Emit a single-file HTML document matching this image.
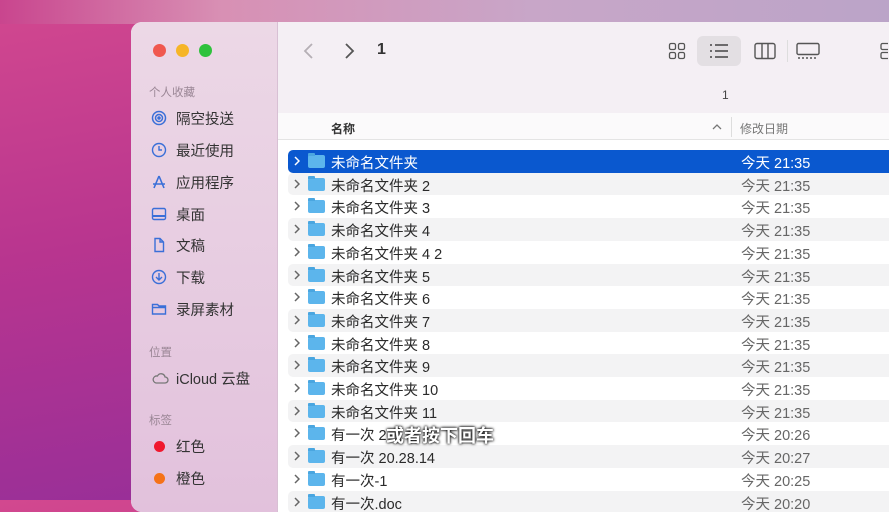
<!DOCTYPE html>
<html><head><meta charset="utf-8"><style>
*{margin:0;padding:0;box-sizing:border-box}
body{width:889px;height:500px;overflow:hidden;position:relative;font-family:"Liberation Sans","Noto Sans CJK SC",sans-serif;background:linear-gradient(170deg,#d2488f 0%,#b8358f 40%,#8a2c9c 100%)}
.top{position:absolute;left:0;top:0;width:889px;height:24px;background:linear-gradient(90deg,#c9458e 0%,#d890b4 25%,#c8a6c8 60%,#bba4c8 100%)}
.win{position:absolute;left:131px;top:22px;width:770px;height:490px;border-radius:11px;overflow:hidden;background:#fff}
.side{position:absolute;left:0;top:0;width:147px;height:100%;background:linear-gradient(180deg,#ecd8e6,#e2c1dc);border-right:1px solid #d8c0d4}
.dot{position:absolute;top:22px;width:13px;height:13px;border-radius:50%}
.sh{position:absolute;left:18px;font-size:11.5px;color:#9b8796}
.si{position:absolute;left:45px;font-size:14.5px;color:#333}
.ic{position:absolute;left:20px;width:16px;height:16px;color:#3a6fd8}
.main{position:absolute;left:147px;top:0;right:0;height:100%}
.tb{position:absolute;left:0;top:0;right:0;height:91px;background:#f4eff4}
.hdr{position:absolute;left:0;top:91px;right:0;height:27px;background:#fbfafb;border-bottom:1px solid #e4e4e4;font-size:12px;color:#333}
.row{position:absolute;left:10px;right:0;height:22.7px;font-size:14.5px;color:#2a2a2a}
.row.s{background:#f3f3f4;border-radius:5px 0 0 5px}
.row.sel{background:#0a58cf;color:#fff;border-radius:5px 0 0 5px}
.row .ch{position:absolute;left:6px;top:6px}
.row .fd{position:absolute;left:20px;top:5px;width:17px;height:13px;background:#5cb5ec;border-radius:2px}
.row .fd:before{content:"";position:absolute;left:0;top:-2px;width:7px;height:3px;background:#4aa6e0;border-radius:1px 1px 0 0}
.row .n{position:absolute;left:43px;top:2px}
.row .d{position:absolute;left:453px;top:2px;color:#666}
.sel .d{color:#fff}
</style></head><body>
<div class="top"></div>
<div class="win">
<div class="side">
<div class="dot" style="left:22px;background:#f0584f"></div>
<div class="dot" style="left:45px;background:#f6b527"></div>
<div class="dot" style="left:68px;background:#2fc23d"></div>
<div class="sh" style="top:62px">个人收藏</div>
<svg class="ic" style="top:88px" viewBox="0 0 16 16" fill="none" stroke="#3a6fd8" stroke-width="1.5"><circle cx="8" cy="8" r="6.5"/><circle cx="8" cy="8" r="3.5"/><circle cx="8" cy="8" r="1" fill="#3a6fd8"/></svg>
<div class="si" style="top:86px">隔空投送</div>
<svg class="ic" style="top:120px" viewBox="0 0 16 16" fill="none" stroke="#3a6fd8" stroke-width="1.4"><circle cx="8" cy="8" r="6.5"/><path d="M8 4v4h3"/></svg>
<div class="si" style="top:118px">最近使用</div>
<svg class="ic" style="top:152px" viewBox="0 0 16 16" fill="none" stroke="#3a6fd8" stroke-width="1.6"><path d="M8 2L3 14M8 2l5 12M2 10h12"/></svg>
<div class="si" style="top:150px">应用程序</div>
<svg class="ic" style="top:184px" viewBox="0 0 16 16" fill="none" stroke="#3a6fd8" stroke-width="1.4"><rect x="1.5" y="2.5" width="13" height="11" rx="1.5"/><path d="M2 10h12" stroke-width="2"/></svg>
<div class="si" style="top:182px">桌面</div>
<svg class="ic" style="top:215px" viewBox="0 0 16 16" fill="none" stroke="#3a6fd8" stroke-width="1.4"><path d="M4 1.5h5l3.5 3.5v9.5H4z M9 1.5V5h3.5"/></svg>
<div class="si" style="top:213px">文稿</div>
<svg class="ic" style="top:247px" viewBox="0 0 16 16" fill="none" stroke="#3a6fd8" stroke-width="1.4"><circle cx="8" cy="8" r="6.5"/><path d="M8 4v7M5 8l3 3 3-3"/></svg>
<div class="si" style="top:245px">下载</div>
<svg class="ic" style="top:279px" viewBox="0 0 16 16" fill="none" stroke="#3a6fd8" stroke-width="1.4"><path d="M1.5 3.5h5l1.5 1.5h6.5v8h-13z M1.5 6.5h13"/></svg>
<div class="si" style="top:277px">录屏素材</div>
<div class="sh" style="top:322px">位置</div>
<svg class="ic" style="top:348px;width:18px" viewBox="0 0 18 16" fill="none" stroke="#777" stroke-width="1.3"><path d="M5 13h9a3 3 0 0 0 0-6 4 4 0 0 0-7.5-1A3.5 3.5 0 0 0 5 13z"/></svg>
<div class="si" style="top:346px">iCloud 云盘</div>
<div class="sh" style="top:390px">标签</div>
<div style="position:absolute;left:23px;top:419px;width:11px;height:11px;border-radius:50%;background:#f0182e"></div>
<div class="si" style="top:414px">红色</div>
<div style="position:absolute;left:23px;top:451px;width:11px;height:11px;border-radius:50%;background:#f57218"></div>
<div class="si" style="top:446px">橙色</div>
</div>
<div class="main">
<div class="tb">
<svg style="position:absolute;left:24px;top:20px" width="14" height="18" viewBox="0 0 14 18" fill="none" stroke="#b5afb5" stroke-width="1.8"><path d="M10 2L3 9l7 7"/></svg>
<svg style="position:absolute;left:64px;top:20px" width="14" height="18" viewBox="0 0 14 18" fill="none" stroke="#555" stroke-width="1.8"><path d="M4 2l7 7-7 7"/></svg>
<div style="position:absolute;left:99px;top:19px;font-size:16px;font-weight:bold;color:#333">1</div>
<svg style="position:absolute;left:390px;top:20px" width="18" height="18" viewBox="0 0 18 18" fill="none" stroke="#555" stroke-width="1.3"><rect x="1.5" y="1.5" width="6" height="6" rx="1.5"/><rect x="10.5" y="1.5" width="6" height="6" rx="1.5"/><rect x="1.5" y="10.5" width="6" height="6" rx="1.5"/><rect x="10.5" y="10.5" width="6" height="6" rx="1.5"/></svg>
<div style="position:absolute;left:419px;top:14px;width:44px;height:30px;border-radius:6px;background:#e3dfe3"></div>
<svg style="position:absolute;left:431px;top:21px" width="20" height="16" viewBox="0 0 20 16" fill="none" stroke="#444" stroke-width="1.5"><path d="M6 2h13M6 8h13M6 14h13M1 2h2M1 8h2M1 14h2"/></svg>
<svg style="position:absolute;left:476px;top:20px" width="22" height="18" viewBox="0 0 22 18" fill="none" stroke="#555" stroke-width="1.4"><rect x="1" y="1.5" width="20" height="15" rx="2"/><path d="M8 2v14M14 2v14"/></svg>
<div style="position:absolute;left:509px;top:18px;width:1px;height:22px;background:#ddd"></div>
<svg style="position:absolute;left:518px;top:20px" width="24" height="18" viewBox="0 0 24 18" fill="none" stroke="#555" stroke-width="1.4"><rect x="1" y="1.5" width="22" height="11" rx="1.5"/><path d="M2 16h20" stroke-dasharray="2 2"/></svg>
<svg style="position:absolute;left:600px;top:20px" width="10" height="18" viewBox="0 0 10 18" fill="none" stroke="#555" stroke-width="1.3"><rect x="3" y="1.5" width="8" height="6" rx="1.5"/><rect x="3" y="10.5" width="8" height="6" rx="1.5"/></svg>
<div style="position:absolute;left:444px;top:66px;font-size:12px;color:#444">1</div>
</div>
<div class="hdr">
<div style="position:absolute;left:53px;top:7px;font-weight:bold">名称</div>
<svg style="position:absolute;left:434px;top:11px" width="10" height="6" viewBox="0 0 10 6" fill="none" stroke="#777" stroke-width="1.3"><path d="M1 5l4-4 4 4"/></svg>
<div style="position:absolute;left:453px;top:4px;width:1px;height:20px;background:#ddd"></div>
<div style="position:absolute;left:462px;top:7px;color:#777">修改日期</div>
</div>
<div id="rows"></div>
</div>
</div>
<div style="position:absolute;left:386px;top:422px;font-size:18px;font-weight:bold;color:#fff;text-shadow:0 0 2px #000,0 0 3px #000">或者按下回车</div>
<script>
var r=[["未命名文件夹","今天 21:35"],["未命名文件夹 2","今天 21:35"],["未命名文件夹 3","今天 21:35"],["未命名文件夹 4","今天 21:35"],["未命名文件夹 4 2","今天 21:35"],["未命名文件夹 5","今天 21:35"],["未命名文件夹 6","今天 21:35"],["未命名文件夹 7","今天 21:35"],["未命名文件夹 8","今天 21:35"],["未命名文件夹 9","今天 21:35"],["未命名文件夹 10","今天 21:35"],["未命名文件夹 11","今天 21:35"],["有一次 2","今天 20:26"],["有一次 20.28.14","今天 20:27"],["有一次-1","今天 20:25"],["有一次.doc","今天 20:20"]];
var h="";r.forEach(function(x,i){var c=i==0?"row sel":(i%2?"row s":"row");var sc=i==0?"#fff":"#666";h+='<div class="'+c+'" style="top:'+(128+i*22.7)+'px"><svg class="ch" width="6" height="10" viewBox="0 0 6 10" fill="none" stroke="'+sc+'" stroke-width="1.5"><path d="M1 1l4 4-4 4"/></svg><span class="fd"></span><span class="n">'+x[0]+'</span><span class="d">'+x[1]+'</span></div>'});
document.getElementById("rows").innerHTML=h;
</script>
</body></html>
